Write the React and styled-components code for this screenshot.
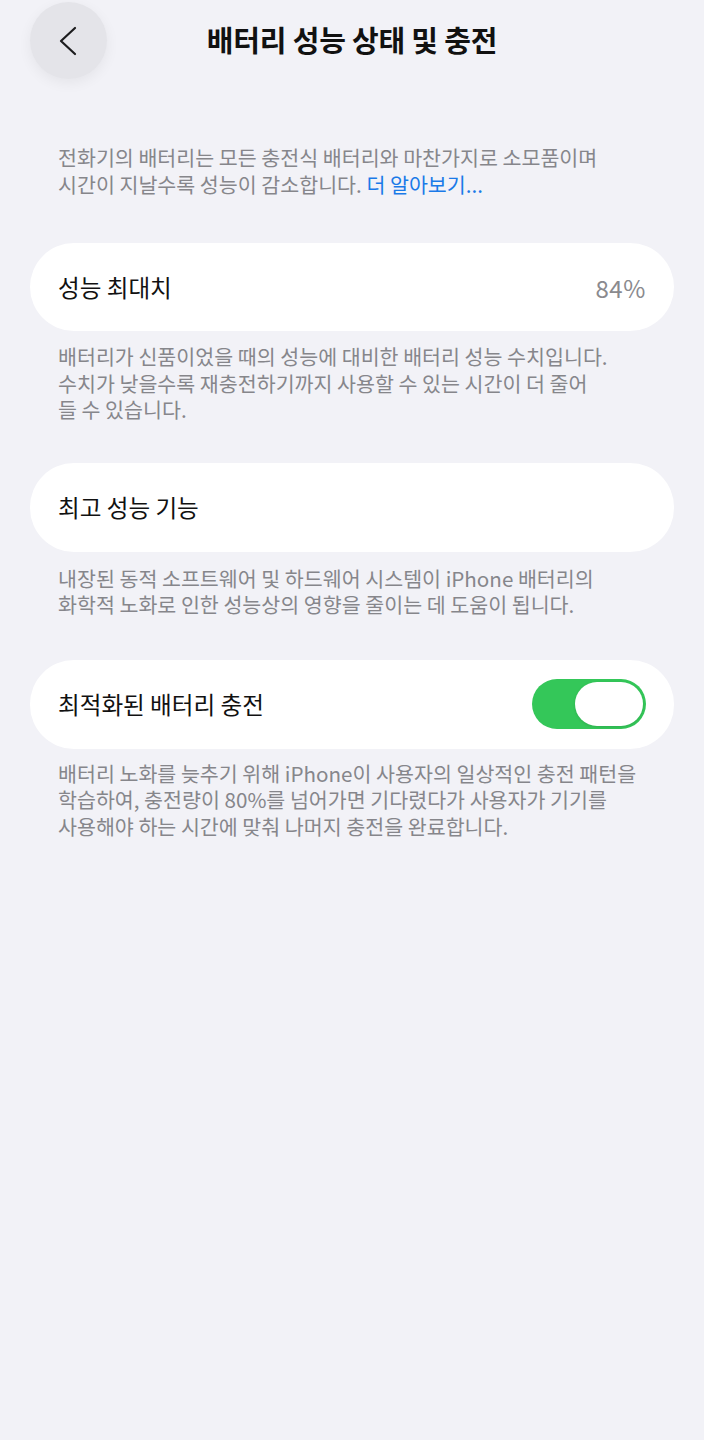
import React, { useState } from 'react';
import styled, { createGlobalStyle } from 'styled-components';

const GlobalStyle = createGlobalStyle`
	body {
		margin: 0;
		background: #f2f2f7;
		font-family: "Noto Sans CJK KR", "Noto Sans", sans-serif;
		-webkit-font-smoothing: antialiased;
	}
`;

const Page = styled.div`
	min-height: 1440px;
	background: #f2f2f7;
	padding-top: 2px;
	box-sizing: border-box;
`;

const Header = styled.header`
	display: grid;
	grid-template-columns: 1fr auto 1fr;
	align-items: center;
	height: 77px;
	padding: 0 30px;
`;

const BackButton = styled.button`
	width: 77px;
	height: 77px;
	border-radius: 50%;
	border: none;
	background: #e4e4e9;
	box-shadow: 0 4px 14px rgba(0, 0, 0, 0.06);
	display: flex;
	align-items: center;
	justify-content: center;
	padding: 0 2px 0 0;
	color: #1c1c1e;
`;

const Title = styled.h1`
	margin: 0;
	padding-bottom: 4px;
	font-size: 29px;
	font-weight: 700;
	color: #111;
	letter-spacing: -0.2px;
`;

const Content = styled.main`
	padding: 65px 30px 0;
	display: flex;
	flex-direction: column;
`;

const Note = styled.p`
	margin: ${props => props.$top || 0}px 0 0;
	padding: 0 28px;
	font-size: 20.6px;
	line-height: 26.5px;
	color: #86868b;
	white-space: nowrap;
`;

const Link = styled.a`
	color: #1a7ae8;
	text-decoration: none;
`;

const Card = styled.div`
	margin-top: ${props => props.$top}px;
	height: ${props => props.$height || 88}px;
	border-radius: 44px;
	background: #fff;
	display: flex;
	align-items: center;
	justify-content: space-between;
	padding: 0 28px;
`;

const Label = styled.span`
	font-size: 23.6px;
	color: #111;
`;

const Value = styled.span`
	font-size: 24px;
	color: #8a8a8e;
	letter-spacing: 0.6px;
`;

const Toggle = styled.button`
	width: 114px;
	height: 50px;
	border-radius: 25px;
	border: none;
	padding: 3px;
	background: ${props => (props.$on ? '#34c759' : '#e5e5ea')};
	display: flex;
	justify-content: ${props => (props.$on ? 'flex-end' : 'flex-start')};
`;

const Knob = styled.span`
	width: 68px;
	height: 44px;
	border-radius: 22px;
	background: #fff;
	box-shadow: 0 1px 3px rgba(0, 0, 0, 0.12);
`;

export default function App() {
	const [optimized, setOptimized] = useState(true);

	return (
		<Page>
			<GlobalStyle />
			<Header>
				<BackButton aria-label="뒤로">
					<svg width="18" height="30" viewBox="0 0 18 30" fill="none">
						<path d="M16 2 L2 15 L16 28" stroke="currentColor" strokeWidth="2.2" strokeLinecap="round" strokeLinejoin="round" />
					</svg>
				</BackButton>
				<Title>배터리 성능 상태 및 충전</Title>
				<span />
			</Header>

			<Content>
				<Note>
					전화기의 배터리는 모든 충전식 배터리와 마찬가지로 소모품이며
					<br />
					시간이 지날수록 성능이 감소합니다. <Link href="#">더 알아보기...</Link>
				</Note>

				<Card $top={46} $height={88}>
					<Label>성능 최대치</Label>
					<Value>84%</Value>
				</Card>
				<Note $top={12}>
					배터리가 신품이었을 때의 성능에 대비한 배터리 성능 수치입니다.
					<br />
					수치가 낮을수록 재충전하기까지 사용할 수 있는 시간이 더 줄어
					<br />
					들 수 있습니다.
				</Note>

				<Card $top={40} $height={89}>
					<Label>최고 성능 기능</Label>
				</Card>
				<Note $top={13}>
					내장된 동적 소프트웨어 및 하드웨어 시스템이 iPhone 배터리의
					<br />
					화학적 노화로 인한 성능상의 영향을 줄이는 데 도움이 됩니다.
				</Note>

				<Card $top={42} $height={89}>
					<Label>최적화된 배터리 충전</Label>
					<Toggle $on={optimized} onClick={() => setOptimized(!optimized)}>
						<Knob />
					</Toggle>
				</Card>
				<Note $top={11}>
					배터리 노화를 늦추기 위해 iPhone이 사용자의 일상적인 충전 패턴을
					<br />
					학습하여, 충전량이 80%를 넘어가면 기다렸다가 사용자가 기기를
					<br />
					사용해야 하는 시간에 맞춰 나머지 충전을 완료합니다.
				</Note>
			</Content>
		</Page>
	);
}
